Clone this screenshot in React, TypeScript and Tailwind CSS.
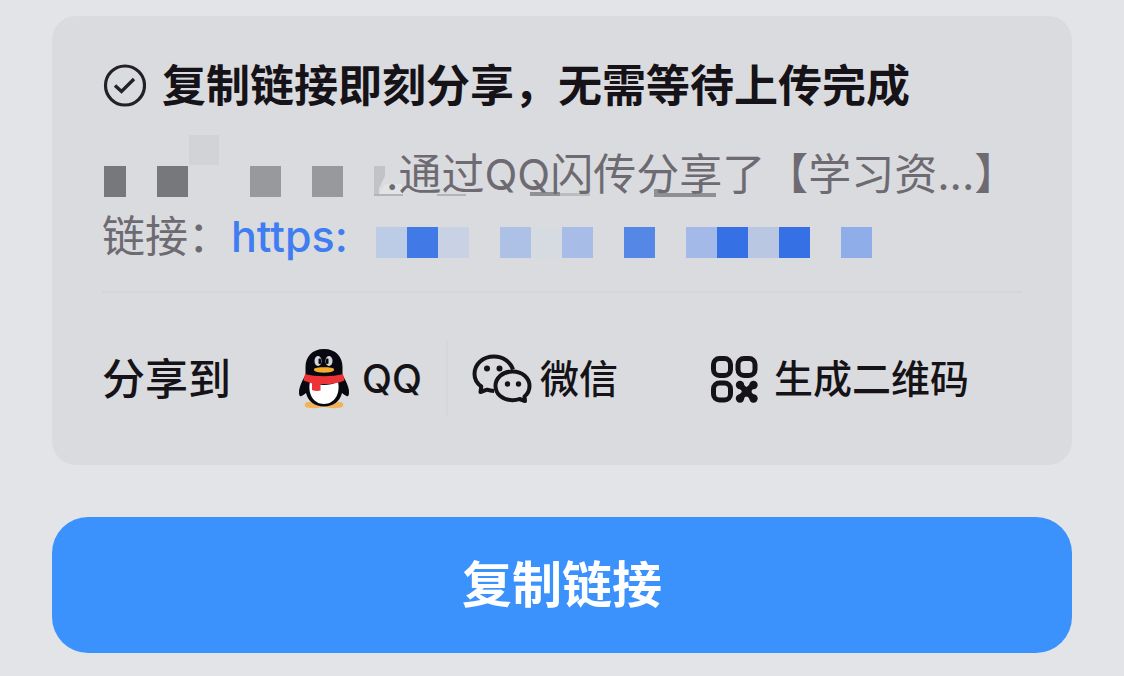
import type { ReactNode } from 'react'

const nameCells = [
  'w-[22px] bg-[#77787b]',
  'w-[31px]',
  'w-[31px] bg-[#77787b]',
  'w-[62px]',
  'w-[31px] bg-[#98999c]',
  'w-[31px]',
  'w-[31px] bg-[#98999c]',
  'w-[31px]',
]

const urlCells = [
  'bg-[#bccbe6]',
  'bg-[#4179e6]',
  'bg-[#c9d2e4]',
  '',
  'bg-[#adc0e6]',
  'bg-[#d6dae1]',
  'bg-[#a7bde8]',
  '',
  'bg-[#5487e6]',
  '',
  'bg-[#a3bae8]',
  'bg-[#3570e4]',
  'bg-[#b9c7e2]',
  'bg-[#3570e4]',
  '',
  'bg-[#8fade8]',
]

function CheckCircle() {
  return (
    <svg viewBox="0 0 44 44" className="size-11 shrink-0" fill="none" stroke="#242027" aria-hidden="true">
      <circle cx="23" cy="21.500" r="19.500" strokeWidth="3.200" />
      <path d="M13 21.500l6.500 6L32 15" strokeWidth="3.400" />
    </svg>
  )
}

function Penguin() {
  return (
    <svg viewBox="0 0 52 60" className="h-[60px] w-[52px]" aria-hidden="true">
      <path
        d="M9 53c-3 1-3 5 0 5.500 5 1 12 1 17-1 5 2 12 2 17 1 3-.5 3-4.500 0-5.500z"
        fill="#f0b35c"
      />
      <path
        d="M26 0C14 0 7.500 8 7.500 18v8C4.500 31 1 38 1 43c0 4 1 5 2.500 4 1.500-.8 3-1.800 4.500-3 2 8.500 9 13.500 18 13.500S42 52.500 44 44c1.500 1.200 3 2.200 4.500 3 1.500 1 2.500 0 2.500-4 0-5-3.500-12-6.500-17v-8C44.500 8 38 0 26 0z"
        fill="#080810"
      />
      <path d="M12 33c-2.500 11 3 22 14 22s16.500-11 14-22c-9 4-19 4-28 0z" fill="#fff" />
      <ellipse cx="20" cy="12" rx="3.500" ry="5" fill="#d5d6dc" />
      <ellipse cx="31" cy="12" rx="3.500" ry="5" fill="#d5d6dc" />
      <rect x="20.500" y="9.500" width="2.500" height="5.500" rx="1" fill="#080810" />
      <rect x="28" y="9.500" width="2.500" height="5.500" rx="1" fill="#080810" />
      <path d="M16 20c0-2.500 20-2.500 20 0v1c0 3.500-20 3.500-20 0z" fill="#f6ac2c" />
      <path
        d="M7 25c11 3 27 3 38 0l1.500 6.500c-7 3-16 4-24 3.500v6.500c-3 .8-6 .3-8.500-.5v-6.500l-8.500-3z"
        fill="#ed3337"
      />
    </svg>
  )
}

function WeChat() {
  return (
    <svg viewBox="0 0 60 50" className="h-[50px] w-[60px]" aria-hidden="true">
      <g fill="none" stroke="#151218" strokeWidth="4" strokeLinejoin="round">
        <path d="M22 37c-3 0-5-.5-7-1.300L8.500 38l.8-5.500C5 29.500 2.500 25 2.500 20 2.500 10 11 2.500 22 2.500c9 0 16.500 5.500 19 13" />
        <path d="M40.500 17.500c10 0 17 6.500 17 14.500 0 4.500-2 8-5 10.500l.5 4.500-5.500-2c-2 .8-4.500 1.200-7 1.200-10 0-17-6.200-17-14.200s7-14.500 17-14.500z" />
      </g>
      <g fill="#151218">
        <circle cx="15" cy="14.500" r="3" />
        <circle cx="27.500" cy="14.500" r="3" />
        <circle cx="35.500" cy="30" r="2.700" />
        <circle cx="46.500" cy="30" r="2.700" />
      </g>
    </svg>
  )
}

function QrCode() {
  return (
    <svg viewBox="0 0 48 48" className="size-12" fill="none" stroke="#151218" aria-hidden="true">
      <g strokeWidth="5">
        <rect x="3.500" y="3.500" width="17" height="17" rx="6" />
        <rect x="28" y="3.500" width="17" height="17" rx="6" />
        <rect x="3.500" y="28" width="17" height="17" rx="6" />
      </g>
      <path d="M30 30l13 13m0-13l-13 13" strokeWidth="6" strokeLinecap="round" />
      <g fill="#151218" stroke="none">
        <circle cx="30" cy="30" r="4.200" />
        <circle cx="43.500" cy="30" r="4.200" />
        <circle cx="30" cy="43.500" r="4.200" />
        <circle cx="43.500" cy="43.500" r="4.200" />
        <circle cx="36.700" cy="36.700" r="5" />
      </g>
    </svg>
  )
}

// Leftovers of the mosaic that show around the sender line
function MosaicEdges() {
  return (
    <svg viewBox="0 0 350 62" className="absolute top-0 left-0 h-[62px] w-[350px]" aria-hidden="true">
      <path d="M0 23h11v10L5 45v8H0z" fill="#c2c3c6" />
      <path d="M5 51l6-10h17v10z" fill="#e2e3e6" />
      <path d="M0 51h29v2H0zM63 51h29v2H63z" fill="#b3b4b7" />
      <path d="M156 49h30v4h-30z" fill="#8f9093" />
      <path d="M186 50h30v3h-30z" fill="#bbbcbf" />
      <path d="M280 46h8v4h54v4h-62z" fill="#8f9093" />
    </svg>
  )
}

function ShareButton({ icon, className, children }: { icon: ReactNode; className: string; children: ReactNode }) {
  return (
    <button type="button" className={`flex cursor-pointer items-center font-medium ${className}`}>
      {icon}
      <span>{children}</span>
    </button>
  )
}

export default function App() {
  return (
    <main className="min-h-screen bg-[#e3e4e7] px-13 pt-4 pb-5 font-['Inter','Noto_Sans_CJK_SC',sans-serif] text-[#151218]">
      <section className="rounded-3xl bg-[#dadbde] px-[50px] pt-10 pb-12">
        <h1 className="flex h-[60px] items-center gap-4 text-[44px] leading-[60px] font-bold whitespace-nowrap">
          <CheckCircle />
          复制链接即刻分享，无需等待上传完成
        </h1>

        <div className="mt-[27px] text-[43px] leading-[62px] whitespace-nowrap text-[#6d6a72]">
          <div className="flex pl-0.5">
            <div className="relative flex h-[62px] items-end pb-2" aria-hidden="true">
              {nameCells.map((cell, i) => (
                <span key={i} className={`h-[31px] ${cell}`} />
              ))}
              <span className="absolute -top-2 left-[85px] size-[30px] bg-[#d2d3d6]" />
            </div>
            <p className="relative pl-3">
              <MosaicEdges />
              <span className="relative">.通过QQ闪传分享了【学习资...】</span>
            </p>
          </div>
          <div className="flex items-center">
            <span>链接：</span>
            <a href="#link" className="flex items-center gap-7 font-medium text-[#3f7df0]">
              https:
              <span className="flex pt-3" aria-hidden="true">
                {urlCells.map((cell, i) => (
                  <span key={i} className={`size-[31px] ${cell}`} />
                ))}
              </span>
            </a>
          </div>
        </div>

        <hr className="mt-6 border-t-2 border-[#d4d6d9]" />

        <div className="mt-12 flex h-[76px] items-center text-[39px] whitespace-nowrap">
          <span className="text-[43px] font-medium">分享到</span>
          <ShareButton icon={<Penguin />} className="ml-[67px] gap-3">
            QQ
          </ShareButton>
          <span className="ml-6 h-full w-0.5 bg-[#d4d6d9]" />
          <ShareButton icon={<WeChat />} className="ml-6 gap-2">
            微信
          </ShareButton>
          <ShareButton icon={<QrCode />} className="ml-[92px] gap-4">
            生成二维码
          </ShareButton>
        </div>
      </section>

      <button
        type="button"
        className="mt-13 h-[136px] w-full cursor-pointer rounded-[36px] bg-[#3c92fd] text-[50px] font-bold text-white"
      >
        复制链接
      </button>
    </main>
  )
}
